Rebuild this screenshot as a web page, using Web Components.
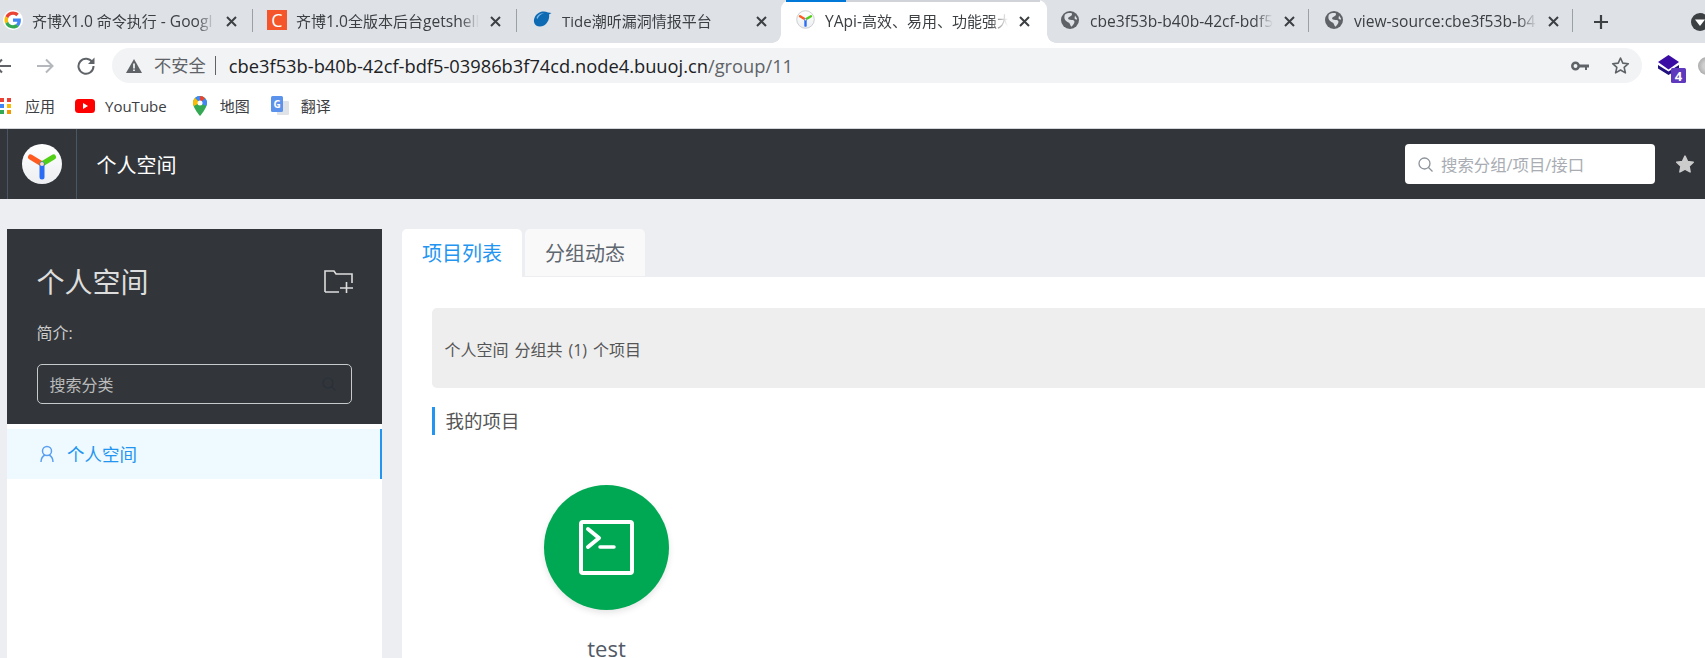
<!DOCTYPE html>
<html lang="zh"><head><meta charset="utf-8"><title>YApi</title>
<style>
html,body{margin:0;padding:0;width:1705px;height:658px;overflow:hidden;background:#eceef1;font-family:"Open Sans","Noto Sans CJK SC",sans-serif}
</style></head><body>
<x-app></x-app>

<script>
const LOGO=(s,ring)=>`<svg width="${s}" height="${s}" viewBox="0 0 40 40"><defs><linearGradient id="lg${ring?2:1}" x1="0" y1="0" x2="0" y2="1"><stop offset="0" stop-color="#fff"/><stop offset="1" stop-color="#eceef1"/></linearGradient></defs><circle cx="20" cy="20" r="${ring?18.5:20}" fill="url(#lg${ring?2:1})" ${ring?'stroke="#c9cccf" stroke-width="2"':''}/><g fill="none" stroke-width="5" stroke-linecap="round"><path d="M20 20 8.500 13" stroke="#ff5a1f"/><path d="M20 20 31.500 13" stroke="#52d017"/><path d="M20 20V33" stroke="#2a6df4"/></g><circle cx="20" cy="20" r="2" fill="#ffd9c4"/></svg>`;
const GLOBE=`<svg width="18" height="18" viewBox="0 0 18 18"><circle cx="9" cy="9" r="9" fill="#5f6368"/><path d="M4 3.500C6.500 2 9 1.800 11 2.500 11.500 4.500 9 5.500 7.500 6.500 6.500 7.500 7.500 8.500 9 8.800 11 9 13 9 13.500 10.500 13.500 12.500 12 14 10.500 15.800 9.300 15 9.300 13 8 11.800 6 11 4 9.500 3.500 7.500 3.300 6 3.500 4.500 4 3.500z" fill="#dee1e6"/><path d="M14 4.500 16 7.500 15.500 9 13.500 7.500z" fill="#dee1e6"/></svg>`;
const GOOGLE=`<svg width="20" height="20" viewBox="0 0 48 48"><circle cx="24" cy="24" r="24" fill="#fff"/><g transform="translate(3.500 3.500) scale(.855)"><path fill="#EA4335" d="M24 9.500c3.500 0 6.700 1.200 9.200 3.600l6.900-6.900C35.900 2.400 30.500 0 24 0 14.600 0 6.500 5.400 2.600 13.200l8 6.200C12.400 13.700 17.700 9.500 24 9.500z"/><path fill="#4285F4" d="M46.100 24.500c0-1.600-.1-3.100-.4-4.500H24v9h12.400c-.5 2.900-2.200 5.400-4.700 7l7.700 6c4.500-4.200 6.700-10.300 6.700-17.500z"/><path fill="#FBBC05" d="M10.500 28.600c-.5-1.400-.8-3-.8-4.600s.3-3.200.8-4.600l-8-6.200C1 16.400 0 20.100 0 24s.9 7.600 2.600 10.800l7.900-6.200z"/><path fill="#34A853" d="M24 48c6.500 0 11.900-2.100 15.900-5.800l-7.700-6c-2.200 1.500-4.900 2.300-8.200 2.300-6.300 0-11.600-4.200-13.500-9.900l-8 6.200C6.500 42.600 14.600 48 24 48z"/></g></svg>`;
const CSQ=`<svg width="20" height="20" viewBox="0 0 20 20"><rect width="20" height="20" fill="#f4552a"/><text x="10" y="16.500" font-size="18" fill="#fff" text-anchor="middle" font-family="Open Sans">C</text></svg>`;
const TIDE=`<svg width="19" height="19" viewBox="0 0 19 19"><path d="M1 12C.5 8 3 3.500 7.500 2 10 1.200 13 1.500 15 2.500L18.500 3 16 4.500C16.800 8 15 13 11 15.500 7 17.800 1.800 16.500 1 12z" fill="#0f6ab4"/><path d="M3.500 8C4.500 5 7.500 3 11 3.300 8 4 5.500 6 4.500 9z" fill="#7fb9e6"/></svg>`;

function def(name,html){customElements.define(name,class extends HTMLElement{constructor(){super();this.attachShadow({mode:'open'}).innerHTML=html}})}

def('x-tab',`<style>
:host{display:flex;flex:0 0 var(--w,264px);height:43px;box-sizing:border-box;align-items:center;padding:0 0 0 var(--p,14px);color:#3c4043;font-size:15px;overflow:hidden}
:host([active]){background:#fff;border-radius:9px 9px 0 0}
:host(:first-child){margin-left:-11px}
.f{flex:0 0 29px;display:flex;align-items:center;height:20px}
.t{flex:0 0 183px;white-space:nowrap;overflow:hidden;-webkit-mask-image:linear-gradient(90deg,#000 90%,transparent);mask-image:linear-gradient(90deg,#000 90%,transparent);line-height:43px;height:43px}
.c{flex:0 0 19px;margin-left:7px;height:43px;display:flex;align-items:center;justify-content:center}
.s{flex:0 0 1px;height:23px;background:#9aa0a6;margin-left:var(--m,11px);margin-top:-2px}
:host([nosep]) .s{background:transparent}
</style><span class="f"><slot name="icon"></slot></span><span class="t"><slot></slot></span><span class="c"><svg width="11" height="11" viewBox="0 0 11 11"><path d="M1 1 10 10M10 1 1 10" stroke="#3c4043" stroke-width="2"/></svg></span><span class="s"></span>`);

def('x-tabstrip',`<style>
:host{display:flex;height:43px;background:#dee1e6;align-items:flex-start;position:relative}
.p{margin-left:20px;height:43px;display:flex;align-items:center}
.m{margin-left:82px;height:43px;display:flex;align-items:center}
.bar{position:absolute;left:786px;top:0;width:254px;height:2px;background:linear-gradient(90deg,#0078d7 60px,#d0d3d8 60px)}
.fl,.fr{position:absolute;top:34px;width:9px;height:9px}
.fl{left:772px;background:radial-gradient(circle at 0 0,transparent 8.500px,#fff 9px)}
.fr{left:1047px;background:radial-gradient(circle at 100% 0,transparent 8.500px,#fff 9px)}
</style><slot></slot><span class="p"><svg width="16" height="16" viewBox="0 0 16 16"><path d="M8 1V15M1 8H15" stroke="#3c4043" stroke-width="2.200"/></svg></span><span class="m"><svg width="18" height="18" viewBox="0 0 18 18"><circle cx="9" cy="9" r="9" fill="#3c4043"/><path d="M4 6.500H14L9 13z" fill="#fff"/></svg></span><span class="bar"></span><span class="fl"></span><span class="fr"></span>`);

def('x-omnibox',`<style>
:host{display:flex;align-items:center;flex:0 0 1530px;height:35px;margin-left:17px;background:#f1f3f4;border-radius:18px;box-sizing:border-box;padding:0 12px 0 14px;font-size:17.300px;color:#5f6368;white-space:nowrap;line-height:35px}
.sep{width:1px;height:19px;background:#5f6368;margin:0 12px 0 9px}
.url{font-size:18.300px;margin-left:1px}
.host{color:#202124}
.w{margin-right:12px;display:flex}
.end{margin-left:auto;display:flex;align-items:center;gap:22px}
</style><span class="w"><svg width="16" height="14" viewBox="0 0 16 14"><path d="M8 0 16 14H0z" fill="#5f6368"/><path d="M8 4.500V9.500M8 10.500V12" stroke="#fff" stroke-width="1.600"/></svg></span><span>不安全</span><span class="sep"></span><span class="url"><span class="host">cbe3f53b-b40b-42cf-bdf5-03986b3f74cd.node4.buuoj.cn</span>/group/11</span><span class="end"><svg width="18" height="10" viewBox="0 0 18 10"><circle cx="4.500" cy="5" r="3.200" fill="none" stroke="#5f6368" stroke-width="2.500"/><path d="M8 3.500H18V6.500H16V9H14V6.500H8z" fill="#5f6368"/></svg><svg width="19" height="19" viewBox="0 0 24 24"><path d="M12 2.500 14.900 9l7 .7-5.300 4.700 1.600 6.900L12 17.700l-6.200 3.600 1.600-6.900L2.100 9.700 9.100 9z" fill="none" stroke="#5f6368" stroke-width="2" stroke-linejoin="round"/></svg></span>`);

def('x-toolbar',`<style>
:host{display:flex;height:40px;align-items:flex-end;background:#fff;box-sizing:border-box}
.b{display:flex;height:35px;align-items:center}
.ext{margin-left:15px;height:30px;display:flex;flex:none}
.av{margin-left:11px;width:18px;height:18px;border-radius:50%;background:radial-gradient(circle,#d0d0d0 30%,#aeaeae 70%);flex:none;align-self:flex-end;margin-bottom:8px}
</style><span class="b" style="margin-left:-6px"><svg width="18" height="16" viewBox="0 0 18 16"><path d="M17 8H2M8 1.500 1.500 8 8 14.500" fill="none" stroke="#5f6368" stroke-width="2"/></svg></span><span class="b" style="margin-left:24px"><svg width="18" height="16" viewBox="0 0 18 16"><path d="M1 8H16M10 1.500 16.500 8 10 14.500" fill="none" stroke="#b4b7bb" stroke-width="2"/></svg></span><span class="b" style="margin-left:23px"><svg width="18" height="18" viewBox="0 0 18 18"><path d="M15.500 5.500A7.500 7.500 0 1 0 16.500 9" fill="none" stroke="#5f6368" stroke-width="2"/><path d="M17.500 0.500V7H11z" fill="#5f6368"/></svg></span><x-omnibox></x-omnibox><span class="ext"><svg width="30" height="30" viewBox="0 0 30 30"><path d="M1 12 11.500 18.500 22 12 22 15.500 11.500 22 1 15.500z" fill="#22107e"/><path d="M11.500 2 22 9 11.500 16.500 1 9z" fill="#3a0ca3"/><rect x="14" y="15" width="15" height="15" rx="1.500" fill="#5f39bd"/><text x="21.500" y="27.500" font-size="13" font-weight="700" fill="#fff" text-anchor="middle" font-family="Open Sans">4</text></svg></span><span class="av"></span>`);

def('x-mark',`<style>
:host{display:inline-flex;align-items:center;height:45px;font-size:15px;color:#3c4043;white-space:nowrap}
.i{display:flex;margin-right:var(--g,10px)}
</style><span class="i"><slot name="icon"></slot></span><slot></slot>`);

def('x-bookmarks',`<style>:host{display:flex;height:45px;background:#fff;align-items:center;border-bottom:1px solid #d4d6d9}</style><slot></slot>`);

def('x-logo',`<style>:host{display:inline-flex}</style>${LOGO(40)}`);

def('x-nav',`<style>
:host{display:flex;height:70px;background:#32363a;align-items:center;box-sizing:border-box;padding-left:7px}
.cell{height:70px;width:70px;box-sizing:border-box;border-left:1px solid #4a5663;border-right:1px solid #4a5663;display:flex;align-items:center;justify-content:center}
.title{margin-left:19.500px;color:#fff;font-size:20px}
.search{margin-left:auto;width:250px;height:40px;background:#fff;border-radius:4px;display:flex;align-items:center;padding-left:13px;box-sizing:border-box;color:#a9adb3;font-size:16.400px}
.search svg{margin-right:8px}
.star{margin:0 11px 0 21px;display:flex}
</style><span class="cell"><x-logo></x-logo></span><span class="title">个人空间</span><span class="search"><svg width="15" height="15" viewBox="0 0 15 15"><circle cx="6.500" cy="6.500" r="5.500" fill="none" stroke="#8c939b" stroke-width="1.300"/><path d="M10.500 10.500 14.500 14.500" stroke="#8c939b" stroke-width="1.300"/></svg>搜索分组/项目/接口</span><span class="star"><svg width="18" height="18" viewBox="0 0 24 24"><path d="M12 1.500 15.300 8.500l7.700 1-5.600 5.300 1.400 7.700L12 18.800l-6.800 3.700 1.400-7.700L1 9.500l7.700-1z" fill="#ccc" stroke="#ccc" stroke-width="2" stroke-linejoin="round"/></svg></span>`);

def('x-sidebar',`<style>
:host{display:block;flex:0 0 375px;background:#fff;height:429px}
.head{background:#32363a;height:195px;box-sizing:border-box;padding:0 29px 0 30px}
.top{display:flex;justify-content:space-between;align-items:center;height:105px;color:#ddd;font-size:28px;line-height:38px}
.top span{margin-left:-.5px}
.desc{color:#ccc;font-size:16px;line-height:24px;margin-top:-13px;margin-left:-.5px}
.inp{margin-top:19px;width:315px;height:40px;box-sizing:border-box;border:1px solid #c8c9ca;border-radius:5px;display:flex;align-items:center;justify-content:space-between;padding:0 15px 0 11.500px;color:#bbb;font-size:16px}
.item{margin-top:5px;height:50px;background:#eefaff;border-right:2px solid #2395f1;display:flex;align-items:center;padding:0 0 2px 33px;box-sizing:border-box;color:#2395f1;font-size:17.500px}
.item svg{margin:2px 13px 0 0}
</style><div class="head"><div class="top"><span>个人空间</span><svg width="29" height="23" viewBox="0 0 29 23" fill="none" stroke="#ddd" stroke-width="1.600"><path d="M1 22V1H10L12 4H28V13M1 22H15M16 18H29M22.500 12V23"/></svg></div><div class="desc">简介:</div><div class="inp"><span>搜索分类</span><svg width="14" height="14" viewBox="0 0 14 14"><circle cx="6" cy="6" r="5" fill="none" stroke="#2a303a" stroke-width="1.200"/><path d="M9.500 9.500 13.500 13.500" stroke="#2a303a" stroke-width="1.200"/></svg></div></div><div class="item"><svg width="14" height="18" viewBox="0 0 14 18" fill="none" stroke="#5b9ff0" stroke-width="1.500"><circle cx="7" cy="6" r="4.500"/><path d="M1 17C1 13 3 11 5 10M13 17C13 13 11 11 9 10"/></svg>个人空间</div>`);

def('x-tabs',`<style>
:host{display:flex;height:48px;gap:3px;align-items:flex-start}
span{width:120px;height:47px;line-height:49px;text-align:center;font-size:20px;color:#5e6670;background:#f9f9f9;border-radius:5px 5px 0 0}
span.on{height:48px;background:#fff;color:#2395f1}
</style><span class="on">项目列表</span><span>分组动态</span>`);

def('x-project',`<style>
:host{display:flex;flex-direction:column;align-items:center;width:125px}
.c{width:125px;height:125px;border-radius:50%;background:#00a854;box-shadow:0 3px 6px rgba(0,0,0,.1);display:flex;align-items:center;justify-content:center}
.n{margin-top:29px;font-size:22px;line-height:18px;color:#525a66}
</style><div class="c"><svg width="55" height="55" viewBox="0 0 55 55" fill="none" stroke="#fff" stroke-linecap="round" stroke-linejoin="round"><rect x="2" y="2" width="51" height="51" rx="2" stroke-width="4"/><path d="M9 9 20 18 9 27" stroke-width="4"/><path d="M21 27H35" stroke-width="3.500"/></svg></div><div class="n">test</div>`);

def('x-content',`<style>
:host{display:block;flex:0 0 1400px}
.body{background:#fff;height:381px;padding:31px 0 0 30px;box-sizing:border-box}
.box{height:80px;background:#eee;border-radius:5px;display:flex;align-items:center;padding-left:12.500px;color:#555;font-size:16px;padding-top:1px;box-sizing:border-box;word-spacing:1.800px;white-space:pre}
.h{margin-top:19px;height:28px;border-left:3px solid #2395f1;padding-left:10.500px;line-height:28px;color:#555;font-size:18.500px}
.grid{margin:50px 0 0 112px}
</style><x-tabs></x-tabs><div class="body"><div class="box">个人空间 分组共 (1) 个项目</div><div class="h">我的项目</div><div class="grid"><x-project></x-project></div></div>`);

def('x-page',`<style>:host{display:flex;height:459px;padding:30px 0 0 7px;gap:20px;box-sizing:border-box;overflow:hidden;background:#eceef1}</style><x-sidebar></x-sidebar><x-content></x-content>`);

const L=s=>`<span style="font-size:15.600px">${s}</span>`;
def('x-app',`<style>:host{display:block;width:1705px;height:658px;overflow:hidden}</style>
<x-tabstrip>
<x-tab><span slot="icon">${GOOGLE}</span>齐博${L('X1.0')} 命令执行 ${L('- Googl')}</x-tab>
<x-tab><span slot="icon">${CSQ}</span>齐博${L('1.0')}全版本后台${L('getshell')}漏</x-tab>
<x-tab nosep style="--p:16px"><span slot="icon">${TIDE}</span>Tide潮听漏洞情报平台</x-tab>
<x-tab active nosep style="--p:15px;--w:266px"><span slot="icon">${LOGO(19,1)}</span>${L('YApi-')}高效、易用、功能强大</x-tab>
<x-tab style="--w:262px;--m:9px"><span slot="icon">${GLOBE}</span>${L('cbe3f53b-b40b-42cf-bdf5')}</x-tab>
<x-tab style="--p:16px;--m:9px"><span slot="icon">${GLOBE}</span>${L('view-source:cbe3f53b-b4')}</x-tab>
</x-tabstrip>
<x-toolbar></x-toolbar>
<x-bookmarks>
<x-mark style="margin-left:-7px;--g:14px"><svg slot="icon" width="18" height="18" viewBox="0 0 18 18"><rect x="0" y="1" width="4" height="4" fill="#4285f4"/><rect x="7" y="1" width="4" height="4" fill="#ea4335"/><rect x="14" y="1" width="4" height="4" fill="#ea4335"/><rect x="0" y="7" width="4" height="4" fill="#34a853"/><rect x="7" y="7" width="4" height="4" fill="#4285f4"/><rect x="14" y="7" width="4" height="4" fill="#fbbc05"/><rect x="0" y="13" width="4" height="4" fill="#34a853"/><rect x="7" y="13" width="4" height="4" fill="#34a853"/><rect x="14" y="13" width="4" height="4" fill="#f29900"/></svg>应用</x-mark>
<x-mark style="margin-left:20px"><svg slot="icon" width="20" height="14" viewBox="0 0 20 14"><rect width="20" height="14" rx="3.500" fill="#f00"/><path d="M8 4 13 7 8 10z" fill="#fff"/></svg>YouTube</x-mark>
<x-mark style="margin-left:26px;--g:13px"><svg slot="icon" width="14" height="20" viewBox="0 0 14 20"><path d="M7 0C3 0 0 3 0 7c0 5 7 13 7 13s7-8 7-13c0-4-3-7-7-7z" fill="#34a853"/><path d="M7 0C5 0 3.200 .8 2 2.100L7 7z" fill="#4285f4"/><path d="M7 0c2 0 3.800 .8 5 2.500L7 7z" fill="#ea4335"/><path d="M12 2.500C13.300 3.700 14 5.300 14 7c0 1-.3 2-.8 3L7 7z" fill="#4285f4"/><path d="M2 2.100C.8 3.300 0 5 0 7c0 1 .3 2 .8 3L7 7z" fill="#fbbc05"/><circle cx="7" cy="7" r="2.500" fill="#fff"/></svg>地图</x-mark>
<x-mark style="margin-left:21px;--g:12px"><svg slot="icon" width="18" height="20" viewBox="0 0 18 20"><rect x="6" y="5" width="12" height="14" rx="1" fill="#dfe2e6"/><rect x="0" y="0" width="12" height="16" rx="1.500" fill="#5b93ec"/><text x="6" y="12" font-size="10" font-weight="700" fill="#fff" text-anchor="middle" font-family="Open Sans">G</text></svg>翻译</x-mark>
</x-bookmarks>
<x-nav></x-nav>
<x-page></x-page>`);
</script>
</body></html>
